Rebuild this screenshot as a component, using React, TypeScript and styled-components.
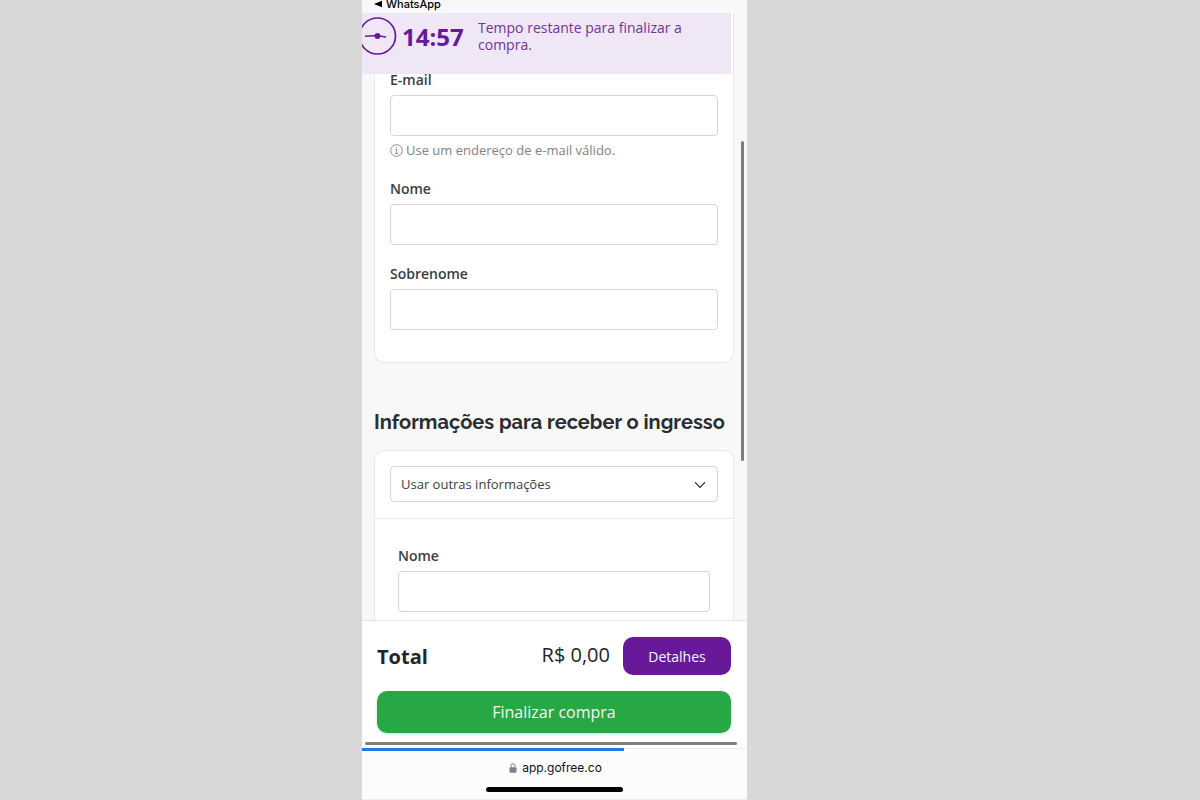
import React from 'react';
import styled, { createGlobalStyle } from 'styled-components';

const GlobalStyle = createGlobalStyle`
  * { box-sizing: border-box; }
  body { margin: 0; background: #d8d8d8; font-family: 'Open Sans', sans-serif; color: #2f3337; }
  button, input, select { font-family: inherit; }
`;

const Page = styled.div`
  display: grid;
  grid-template-columns: 362fr 385px 453fr;
  height: 100vh;
`;

const Phone = styled.div`
  grid-column: 2;
  display: flex;
  flex-direction: column;
  min-height: 0;
  overflow: hidden;
  background: #f8f8f9;
`;

const StatusBar = styled.header`
  display: flex;
  align-items: center;
  gap: 4px;
  height: 13px;
  padding: 0 12px 5px;
  font: 500 11px/8px Inter, sans-serif;
  color: #000;
`;

const Viewport = styled.main`
  position: relative;
  flex: 1;
  min-height: 0;
  overflow: hidden;
  padding: 0 13px 0 12px;
`;

const TimerBanner = styled.div`
  position: absolute;
  top: 0;
  left: 0;
  right: 16px;
  height: 61px;
  display: flex;
  align-items: flex-start;
  background: #efe7f5;
  color: #66199a;
`;

const ClockIcon = styled.svg`
  flex: none;
  width: 35px;
  height: 44px;
`;

const Countdown = styled.strong`
  width: 76px;
  margin-left: 5px;
  font-size: 24px;
  line-height: 48px;
`;

const BannerText = styled.span`
  flex: 1;
  padding-top: 6px;
  font-size: 14px;
  line-height: 17px;
  color: #7232a2;
`;

const ScrollThumb = styled.div`
  position: absolute;
  top: 128px;
  right: 3px;
  width: 3px;
  height: 320px;
  border-radius: 2px;
  background: #7b7b7b;
`;

const Card = styled.section<{ $continued?: boolean }>`
  border: 1px solid #e9e9ea;
  border-radius: ${p => (p.$continued ? '0 0 10px 10px' : '10px 10px 0 0')};
  border-top-width: ${p => (p.$continued ? '0' : '1px')};
  background: #fff;
`;

const FieldGroup = styled.div<{ $pad: string }>`
  display: flex;
  flex-direction: column;
  gap: 19px;
  padding: ${p => p.$pad};
`;

const FieldBox = styled.div`
  display: flex;
  flex-direction: column;
`;

const Label = styled.label`
  margin-bottom: 5px;
  font-size: 14px;
  font-weight: 600;
  line-height: 20px;
  color: #3b3e42;
`;

const TextInput = styled.input`
  width: 100%;
  height: 41px;
  padding: 0 10px;
  border: 1px solid #d5d6d8;
  border-radius: 4px;
  background: #fff;
  font-size: 14px;
`;

const Hint = styled.p`
  display: flex;
  align-items: center;
  gap: 3px;
  margin: 4px 0 0;
  font-size: 13px;
  line-height: 20px;
  color: #828286;
`;

const Heading = styled.h2`
  margin: 45px 0 14px;
  font: 700 20px/28px Raleway, 'Open Sans', sans-serif;
  white-space: nowrap;
  color: #2a2d31;
`;

const SelectRow = styled.div`
  position: relative;
  padding: 15px 15px 16px;
  border-bottom: 1px solid #e9e9ea;
`;

const Select = styled.select`
  display: block;
  width: 100%;
  height: 36px;
  padding: 0 32px 0 10px;
  border: 1px solid #d5d6d8;
  border-radius: 4px;
  appearance: none;
  background: #fff;
  font-size: 13px;
  color: #3b3e42;
`;

const Chevron = styled.svg`
  position: absolute;
  top: 27px;
  right: 26px;
  pointer-events: none;
`;

const Checkout = styled.footer`
  display: flex;
  flex-direction: column;
  gap: 16px;
  padding: 16px 16px 9px 15px;
  border-top: 1px solid #e5e5e6;
  background: #fff;
`;

const TotalRow = styled.div`
  display: flex;
  align-items: center;
  color: #212529;
`;

const TotalLabel = styled.strong`
  flex: 1;
  padding-top: 2px;
  font-size: 20px;
  line-height: 28px;
`;

const Price = styled.span`
  margin-right: 13px;
  padding-bottom: 2px;
  font-size: 20px;
  line-height: 28px;
`;

const Button = styled.button<{ $color: string }>`
  border: 0;
  border-radius: 10px;
  background: ${p => p.$color};
  color: #f6f6f6;
`;

const DetailsButton = styled(Button)`
  width: 108px;
  height: 38px;
  font-size: 14px;
`;

const SubmitButton = styled(Button)`
  height: 42px;
  font-size: 16px;
  box-shadow: 0 1px 3px #28a74544;
`;

const HorizontalScroll = styled.div`
  height: 6px;
  padding: 0 10px 3px 3px;
  background: #fff;

  &::before {
    content: '';
    display: block;
    height: 3px;
    border-radius: 2px;
    background: #7f7f7f;
  }
`;

const BrowserBar = styled.div`
  display: flex;
  flex-direction: column;
  align-items: center;
  height: 52px;
  border-bottom: 1px solid #ececee;
  background: #fcfcfd;
`;

const LoadTrack = styled.div`
  width: 100%;
  height: 3px;
  border-top: 1px solid #ececee;
`;

const LoadProgress = styled.div`
  width: 68%;
  height: 3px;
  margin-top: -1px;
  background: #1f7be6;
`;

const Address = styled.div`
  display: flex;
  align-items: center;
  gap: 5px;
  margin: 7px 0 9px;
  padding-left: 2px;
  font: 400 12px/20px Inter, sans-serif;
  color: #111;
`;

const HomeIndicator = styled.div`
  width: 137px;
  height: 5px;
  border-radius: 3px;
  background: #000;
`;

function Field({ id, label, type = 'text', children }: {
  id: string; label: string; type?: string; children?: React.ReactNode;
}) {
  return (
    <FieldBox>
      <Label htmlFor={id}>{label}</Label>
      <TextInput id={id} type={type} />
      {children}
    </FieldBox>
  );
}

export default function App() {
  return (
    <>
      <GlobalStyle />
      <Page>
        <Phone>
          <StatusBar>
            <svg width="8" height="8" viewBox="0 0 8 8" aria-hidden="true">
              <path d="M0 4 8 .8v6.4z" />
            </svg>
            WhatsApp
          </StatusBar>

          <Viewport>
            <Card $continued>
              <FieldGroup $pad="57px 15px 32px">
                <Field id="email" label="E-mail" type="email">
                  <Hint>
                    <svg width="13" height="13" viewBox="0 0 13 13" fill="none" stroke="currentColor" aria-hidden="true">
                      <circle cx="6.5" cy="6.5" r="5.8" strokeWidth=".9" />
                      <path d="M5.3 5.5h1.4v4M5 9.6h3.2" strokeWidth=".9" />
                      <circle cx="6.4" cy="3.6" r=".7" fill="currentColor" stroke="none" />
                    </svg>
                    Use um endereço de e-mail válido.
                  </Hint>
                </Field>
                <Field id="first-name" label="Nome" />
                <Field id="last-name" label="Sobrenome" />
              </FieldGroup>
            </Card>

            <Heading>Informações para receber o ingresso</Heading>

            <Card>
              <SelectRow>
                <Select aria-label="Informações do ingresso">
                  <option>Usar outras informações</option>
                </Select>
                <Chevron width="14" height="14" viewBox="0 0 14 14" fill="none" stroke="#3b3e42" strokeWidth="1.1" strokeLinecap="round" strokeLinejoin="round" aria-hidden="true">
                  <path d="m2.3 4.5 4.7 5 4.7-5" />
                </Chevron>
              </SelectRow>
              <FieldGroup $pad="27px 23px">
                <Field id="ticket-name" label="Nome" />
              </FieldGroup>
            </Card>

            <TimerBanner>
              <ClockIcon viewBox="0 0 35 44" fill="none" stroke="currentColor" aria-hidden="true">
                <circle cx="15.5" cy="23" r="18" strokeWidth="1.7" />
                <path d="M3.5 23.2 15.5 22.4 23.5 24" strokeWidth="1.5" strokeLinecap="round" />
                <circle cx="15.5" cy="23" r="2.9" fill="currentColor" stroke="none" />
              </ClockIcon>
              <Countdown>14:57</Countdown>
              <BannerText>Tempo restante para finalizar a compra.</BannerText>
            </TimerBanner>
            <ScrollThumb />
          </Viewport>

          <Checkout>
            <TotalRow>
              <TotalLabel>Total</TotalLabel>
              <Price>R$ 0,00</Price>
              <DetailsButton $color="#68199a">Detalhes</DetailsButton>
            </TotalRow>
            <SubmitButton $color="#28a745">Finalizar compra</SubmitButton>
          </Checkout>
          <HorizontalScroll />

          <BrowserBar>
            <LoadTrack>
              <LoadProgress />
            </LoadTrack>
            <Address>
              <svg width="8" height="10" viewBox="0 0 8 10" aria-hidden="true">
                <rect x=".5" y="4.2" width="7" height="5.5" rx="1" fill="#808083" />
                <path d="M2 4.5V2.8a2 2 0 0 1 4 0v1.7" fill="none" stroke="#808083" />
              </svg>
              app.gofree.co
            </Address>
            <HomeIndicator />
          </BrowserBar>
        </Phone>
      </Page>
    </>
  );
}
